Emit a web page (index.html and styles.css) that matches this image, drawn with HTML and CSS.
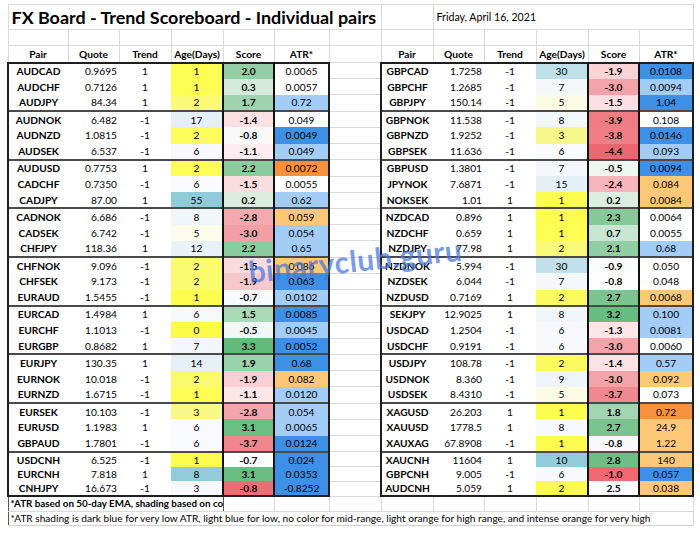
FILE: index.html
```html
<!DOCTYPE html>
<html>
<head>
<meta charset="utf-8">
<title>FX Board - Trend Scoreboard</title>
<link rel="stylesheet" href="styles.css">
</head>
<body>
<div class="sheet">
<table class="grid">
<colgroup>
<col class="cA"><col class="cB"><col class="cC"><col class="cD"><col class="cE"><col class="cF"><col class="cG">
<col class="cH"><col class="cI"><col class="cJ"><col class="cK"><col class="cL"><col class="cM">
</colgroup>
<tbody>
<tr class="row-title"><td colspan="7" class="title">FX Board - Trend Scoreboard - Individual pairs</td><td></td><td colspan="5" class="date">Friday, April 16, 2021</td></tr>
<tr class="row-blank"><td></td><td></td><td></td><td></td><td></td><td></td><td></td><td></td><td></td><td></td><td></td><td></td><td></td></tr>
<tr class="row-head"><th>Pair</th><th>Quote</th><th>Trend</th><th>Age(Days)</th><th>Score</th><th>ATR*</th><td></td><th>Pair</th><th>Quote</th><th>Trend</th><th>Age(Days)</th><th>Score</th><th>ATR*</th></tr>

<tr class="r g0"><td class="p">AUDCAD</td><td class="q">0.9695</td><td class="t">1</td><td class="a" style="background:#fdfd52">1</td><td class="s" style="background:#94cfa6">2.0</td><td class="x">0.0065</td><td class="gap"></td><td class="p">GBPCAD</td><td class="q">1.7258</td><td class="t">-1</td><td class="a" style="background:#bfe0e9">30</td><td class="s" style="background:#f9d3d6">-1.9</td><td class="x db">0.0108</td></tr>
<tr class="r"><td class="p">AUDCHF</td><td class="q">0.7126</td><td class="t">1</td><td class="a" style="background:#fdfd52">1</td><td class="s" style="background:#d4eadb">0.3</td><td class="x">0.0057</td><td class="gap"></td><td class="p">GBPCHF</td><td class="q">1.2685</td><td class="t">-1</td><td class="a" style="background:#f4f8fb">7</td><td class="s" style="background:#f4a3a8">-3.0</td><td class="x lb">0.0094</td></tr>
<tr class="r"><td class="p">AUDJPY</td><td class="q">84.34</td><td class="t">1</td><td class="a" style="background:#fbfb78">2</td><td class="s" style="background:#9fd3ae">1.7</td><td class="x lb">0.72</td><td class="gap"></td><td class="p">GBPJPY</td><td class="q">150.14</td><td class="t">-1</td><td class="a" style="background:#fcfce6">5</td><td class="s" style="background:#fbdfe2">-1.5</td><td class="x db">1.04</td></tr>

<tr class="r g"><td class="p">AUDNOK</td><td class="q">6.482</td><td class="t">-1</td><td class="a" style="background:#e4f0f6">17</td><td class="s" style="background:#fbe1e4">-1.4</td><td class="x">0.049</td><td class="gap"></td><td class="p">GBPNOK</td><td class="q">11.538</td><td class="t">-1</td><td class="a" style="background:#f2f7fb">8</td><td class="s" style="background:#ef7b83">-3.9</td><td class="x">0.108</td></tr>
<tr class="r"><td class="p">AUDNZD</td><td class="q">1.0815</td><td class="t">-1</td><td class="a" style="background:#fdfd5c">2</td><td class="s" style="background:#f8fafa">-0.8</td><td class="x db">0.0049</td><td class="gap"></td><td class="p">GBPNZD</td><td class="q">1.9252</td><td class="t">-1</td><td class="a" style="background:#f8f88c">3</td><td class="s" style="background:#ef7e86">-3.8</td><td class="x db">0.0146</td></tr>
<tr class="r"><td class="p">AUDSEK</td><td class="q">6.537</td><td class="t">-1</td><td class="a" style="background:#f7f9fc">6</td><td class="s" style="background:#fcecee">-1.1</td><td class="x lb">0.049</td><td class="gap"></td><td class="p">GBPSEK</td><td class="q">11.636</td><td class="t">-1</td><td class="a" style="background:#fafbfd">6</td><td class="s" style="background:#ec6670">-4.4</td><td class="x lb">0.093</td></tr>

<tr class="r g"><td class="p">AUDUSD</td><td class="q">0.7753</td><td class="t">1</td><td class="a" style="background:#fdfd55">2</td><td class="s" style="background:#8bcc9e">2.2</td><td class="x io">0.0072</td><td class="gap"></td><td class="p">GBPUSD</td><td class="q">1.3801</td><td class="t">-1</td><td class="a" style="background:#f3f7fb">7</td><td class="s" style="background:#eef6f0">-0.5</td><td class="x db">0.0094</td></tr>
<tr class="r"><td class="p">CADCHF</td><td class="q">0.7350</td><td class="t">-1</td><td class="a" style="background:#fafbfd">6</td><td class="s" style="background:#fbdde0">-1.5</td><td class="x">0.0055</td><td class="gap"></td><td class="p">JPYNOK</td><td class="q">7.6871</td><td class="t">-1</td><td class="a" style="background:#e4eff6">15</td><td class="s" style="background:#f6b5ba">-2.4</td><td class="x lo">0.084</td></tr>
<tr class="r"><td class="p">CADJPY</td><td class="q">87.00</td><td class="t">1</td><td class="a" style="background:#8fcbd8">55</td><td class="s" style="background:#dbede0">0.2</td><td class="x lb">0.62</td><td class="gap"></td><td class="p">NOKSEK</td><td class="q">1.01</td><td class="t">1</td><td class="a" style="background:#fdfd4e">1</td><td class="s" style="background:#dceee1">0.2</td><td class="x lo">0.0084</td></tr>

<tr class="r g"><td class="p">CADNOK</td><td class="q">6.686</td><td class="t">-1</td><td class="a" style="background:#f1f6fb">8</td><td class="s" style="background:#f4a9ae">-2.8</td><td class="x lo">0.059</td><td class="gap"></td><td class="p">NZDCAD</td><td class="q">0.896</td><td class="t">1</td><td class="a" style="background:#fdfd50">1</td><td class="s" style="background:#87ca9a">2.3</td><td class="x">0.0064</td></tr>
<tr class="r"><td class="p">CADSEK</td><td class="q">6.742</td><td class="t">-1</td><td class="a" style="background:#fcfcec">5</td><td class="s" style="background:#f29fa5">-3.0</td><td class="x lb">0.054</td><td class="gap"></td><td class="p">NZDCHF</td><td class="q">0.659</td><td class="t">1</td><td class="a" style="background:#fdfd52">1</td><td class="s" style="background:#c9e6d2">0.7</td><td class="x">0.0055</td></tr>
<tr class="r"><td class="p">CHFJPY</td><td class="q">118.36</td><td class="t">1</td><td class="a" style="background:#eaf2f9">12</td><td class="s" style="background:#8bcc9e">2.2</td><td class="x lb">0.65</td><td class="gap"></td><td class="p">NZDJPY</td><td class="q">77.98</td><td class="t">1</td><td class="a" style="background:#fafa78">2</td><td class="s" style="background:#90cea3">2.1</td><td class="x lb">0.68</td></tr>

<tr class="r g"><td class="p">CHFNOK</td><td class="q">9.096</td><td class="t">-1</td><td class="a" style="background:#fbfb6e">2</td><td class="s" style="background:#fadcdf">-1.5</td><td class="x lo">0.086</td><td class="gap"></td><td class="p">NZDNOK</td><td class="q">5.994</td><td class="t">-1</td><td class="a" style="background:#c1e0e9">30</td><td class="s" style="background:#fbfcfc">-0.9</td><td class="x">0.050</td></tr>
<tr class="r"><td class="p">CHFSEK</td><td class="q">9.173</td><td class="t">-1</td><td class="a" style="background:#fbfb6e">2</td><td class="s" style="background:#f7c9cc">-1.9</td><td class="x db">0.063</td><td class="gap"></td><td class="p">NZDSEK</td><td class="q">6.044</td><td class="t">-1</td><td class="a" style="background:#f4f8fb">7</td><td class="s" style="background:#fdfdfd">-0.8</td><td class="x">0.048</td></tr>
<tr class="r"><td class="p">EURAUD</td><td class="q">1.5455</td><td class="t">-1</td><td class="a" style="background:#fdfd4e">1</td><td class="s" style="background:#f7fafa">-0.7</td><td class="x lb">0.0102</td><td class="gap"></td><td class="p">NZDUSD</td><td class="q">0.7169</td><td class="t">1</td><td class="a" style="background:#fbfb60">2</td><td class="s" style="background:#7ac58f">2.7</td><td class="x lo">0.0068</td></tr>

<tr class="r g"><td class="p">EURCAD</td><td class="q">1.4984</td><td class="t">1</td><td class="a" style="background:#f6f9fc">6</td><td class="s" style="background:#a9d9b7">1.5</td><td class="x db">0.0085</td><td class="gap"></td><td class="p">SEKJPY</td><td class="q">12.9025</td><td class="t">1</td><td class="a" style="background:#f1f6fa">8</td><td class="s" style="background:#67bd7f">3.2</td><td class="x lb">0.100</td></tr>
<tr class="r"><td class="p">EURCHF</td><td class="q">1.1013</td><td class="t">-1</td><td class="a" style="background:#fcfc48">0</td><td class="s" style="background:#f1f7f3">-0.5</td><td class="x lb">0.0045</td><td class="gap"></td><td class="p">USDCAD</td><td class="q">1.2504</td><td class="t">-1</td><td class="a" style="background:#f7f9fc">6</td><td class="s" style="background:#fce6e8">-1.3</td><td class="x lb">0.0081</td></tr>
<tr class="r"><td class="p">EURGBP</td><td class="q">0.8682</td><td class="t">1</td><td class="a" style="background:#f4f7fb">7</td><td class="s" style="background:#63bb7b">3.3</td><td class="x db">0.0052</td><td class="gap"></td><td class="p">USDCHF</td><td class="q">0.9191</td><td class="t">-1</td><td class="a" style="background:#f7f9fc">6</td><td class="s" style="background:#f4a3a8">-3.0</td><td class="x">0.0060</td></tr>

<tr class="r g"><td class="p">EURJPY</td><td class="q">130.35</td><td class="t">1</td><td class="a" style="background:#e6f0f7">14</td><td class="s" style="background:#9ad2aa">1.9</td><td class="x db">0.68</td><td class="gap"></td><td class="p">USDJPY</td><td class="q">108.78</td><td class="t">-1</td><td class="a" style="background:#fbfb60">2</td><td class="s" style="background:#fbe3e5">-1.4</td><td class="x lb">0.57</td></tr>
<tr class="r"><td class="p">EURNOK</td><td class="q">10.018</td><td class="t">-1</td><td class="a" style="background:#fafa6e">2</td><td class="s" style="background:#f8d0d4">-1.9</td><td class="x lo">0.082</td><td class="gap"></td><td class="p">USDNOK</td><td class="q">8.360</td><td class="t">-1</td><td class="a" style="background:#eef4fa">9</td><td class="s" style="background:#f4a3a8">-3.0</td><td class="x lo">0.092</td></tr>
<tr class="r"><td class="p">EURNZD</td><td class="q">1.6715</td><td class="t">-1</td><td class="a" style="background:#fdfd55">1</td><td class="s" style="background:#fbe6e8">-1.1</td><td class="x lb">0.0120</td><td class="gap"></td><td class="p">USDSEK</td><td class="q">8.4310</td><td class="t">-1</td><td class="a" style="background:#fbfbe6">5</td><td class="s" style="background:#f08890">-3.7</td><td class="x">0.073</td></tr>

<tr class="r g"><td class="p">EURSEK</td><td class="q">10.103</td><td class="t">-1</td><td class="a" style="background:#f9f98a">3</td><td class="s" style="background:#f3a6ab">-2.8</td><td class="x lb">0.054</td><td class="gap"></td><td class="p">XAGUSD</td><td class="q">26.203</td><td class="t">1</td><td class="a" style="background:#fdfd50">1</td><td class="s" style="background:#a2d5b1">1.8</td><td class="x io">0.72</td></tr>
<tr class="r"><td class="p">EURUSD</td><td class="q">1.1983</td><td class="t">1</td><td class="a" style="background:#f9fafd">6</td><td class="s" style="background:#6abf82">3.1</td><td class="x lb">0.0065</td><td class="gap"></td><td class="p">XAUUSD</td><td class="q">1778.5</td><td class="t">1</td><td class="a" style="background:#f5f8fc">8</td><td class="s" style="background:#7ac58f">2.7</td><td class="x lo">24.9</td></tr>
<tr class="r"><td class="p">GBPAUD</td><td class="q">1.7801</td><td class="t">-1</td><td class="a" style="background:#f9fafd">6</td><td class="s" style="background:#f0878e">-3.7</td><td class="x db">0.0124</td><td class="gap"></td><td class="p">XAUXAG</td><td class="q">67.8908</td><td class="t">-1</td><td class="a" style="background:#fdfd50">1</td><td class="s" style="background:#f7f9fb">-0.8</td><td class="x lo">1.22</td></tr>

<tr class="r sm g"><td class="p">USDCNH</td><td class="q">6.525</td><td class="t">-1</td><td class="a" style="background:#fdfd50">1</td><td class="s" style="background:#fdfdfe">-0.7</td><td class="x db">0.024</td><td class="gap"></td><td class="p">XAUCNH</td><td class="q">11604</td><td class="t">1</td><td class="a" style="background:#92cbd9">10</td><td class="s" style="background:#6ebf85">2.8</td><td class="x lo">140</td></tr>
<tr class="r sm"><td class="p">EURCNH</td><td class="q">7.818</td><td class="t">1</td><td class="a" style="background:#92cbd9">8</td><td class="s" style="background:#68be80">3.1</td><td class="x db">0.0353</td><td class="gap"></td><td class="p">GBPCNH</td><td class="q">9.005</td><td class="t">-1</td><td class="a" style="background:#f7f9fc">6</td><td class="s" style="background:#f06a72">-1.0</td><td class="x db">0.057</td></tr>
<tr class="r sm last"><td class="p">CNHJPY</td><td class="q">16.673</td><td class="t">-1</td><td class="a" style="background:#f8f9fc">3</td><td class="s" style="background:#f06c74">-0.8</td><td class="x db">-0.8252</td><td class="gap"></td><td class="p">AUDCNH</td><td class="q">5.059</td><td class="t">1</td><td class="a" style="background:#fbfb52">2</td><td class="s" style="background:#ffffff">2.5</td><td class="x lo">0.038</td></tr>

<tr class="row-note1"><td colspan="4" class="note1">*ATR based on 50-day EMA, shading based on co</td><td></td><td></td><td></td><td></td><td></td><td></td><td></td><td></td><td></td></tr>
<tr class="row-note2"><td colspan="13" class="note2">*ATR shading is dark blue for very low ATR, light blue for low, no color for mid-range, light orange for high range, and intense orange for very high</td></tr>
</tbody>
</table>
</div>
<div class="watermark">binaryclub.guru</div>
</body>
</html>
```
FILE: styles.css
```css
html, body {
  margin: 0;
  padding: 0;
  background: #ffffff;
}
body {
  position: relative;
  width: 700px;
  height: 534px;
  overflow: hidden;
  font-family: Lato, "Liberation Sans", sans-serif;
  color: #000;
}
.sheet {
  padding: 4px 0 0 7px;
}
.grid {
  border-collapse: collapse;
  table-layout: fixed;
  width: 685px;
}
.cA { width: 60px; }
.cB { width: 51px; }
.cC { width: 52px; }
.cD { width: 52px; }
.cE { width: 51px; }
.cF { width: 55px; }
.cG { width: 52px; }
.cH { width: 52px; }
.cI { width: 51px; }
.cJ { width: 52px; }
.cK { width: 52px; }
.cL { width: 51px; }
.cM { width: 54px; }

.grid td, .grid th {
  padding: 0 2px;
  border: 1px solid #dadada;
  font-size: 10.2px;
  line-height: 1;
  white-space: nowrap;
  overflow: hidden;
  vertical-align: middle;
  text-align: center;
}
.grid th {
  font-weight: 700;
}

.row-title { height: 25px; }
.row-blank { height: 16px; }
.row-head { height: 17px; }
.r { height: 16.23px; }
.r.sm { height: 14.8px; }
.row-note1 { height: 15px; }
.row-note2 { height: 14px; }

.grid td.title {
  font-size: 17.9px;
  font-weight: 700;
  text-align: left;
  vertical-align: bottom;
  padding: 0 2px 2px 3px;
  overflow: visible;
}
.grid td.date {
  font-size: 10.6px;
  text-align: left;
  vertical-align: top;
  padding: 7px 3px 0 3px;
}

/* data cells: no gridlines inside the boards */
.r td.p, .r td.q, .r td.t, .r td.a, .r td.s, .r td.x {
  border-style: none;
  background: #ffffff;
}
.r td.p {
  font-weight: 700;
  border-left: 2px solid #1e1e1e;
}
.r td.q {
  text-align: right;
  padding-right: 2px;
}
.r td.s {
  font-weight: 700;
  border-left: 2px solid #111;
  border-right: 2px solid #111;
}
.r td.x {
  border-right: 2px solid #1e1e1e;
}
.r.g0 td:not(.gap) { border-top: 2px solid #1e1e1e; }
.r.g td:not(.gap) { border-top: 2px solid #4a4a4a; }
.r.last td:not(.gap) { border-bottom: 2px solid #1e1e1e; }

.r td.x.db { background: #3e90e6; }
.r td.x.lb { background: #a3cdf7; }
.r td.x.lo { background: #fdc978; }
.r td.x.io { background: #f7913d; }

.grid td.note1 {
  font-weight: 700;
  text-align: left;
  font-size: 9.8px;
  padding: 0 2px;
  border-left: 1px solid #555;
  border-right: 1px solid #555;
}
.grid td.note2 {
  text-align: left;
  font-size: 10.15px;
  padding: 0 2px;
  border-left: 1px solid #555;
  border-bottom: 1px solid #cfcfcf;
}

.watermark {
  position: absolute;
  left: 250px;
  top: 256px;
  height: 30px;
  font-family: Lato, "Liberation Sans", sans-serif;
  font-weight: 700;
  font-size: 30px;
  line-height: 1;
  letter-spacing: 0.5px;
  color: rgba(70, 118, 220, 0.72);
  transform: rotate(-6deg);
  transform-origin: left bottom;
  white-space: nowrap;
  pointer-events: none;
}
```
